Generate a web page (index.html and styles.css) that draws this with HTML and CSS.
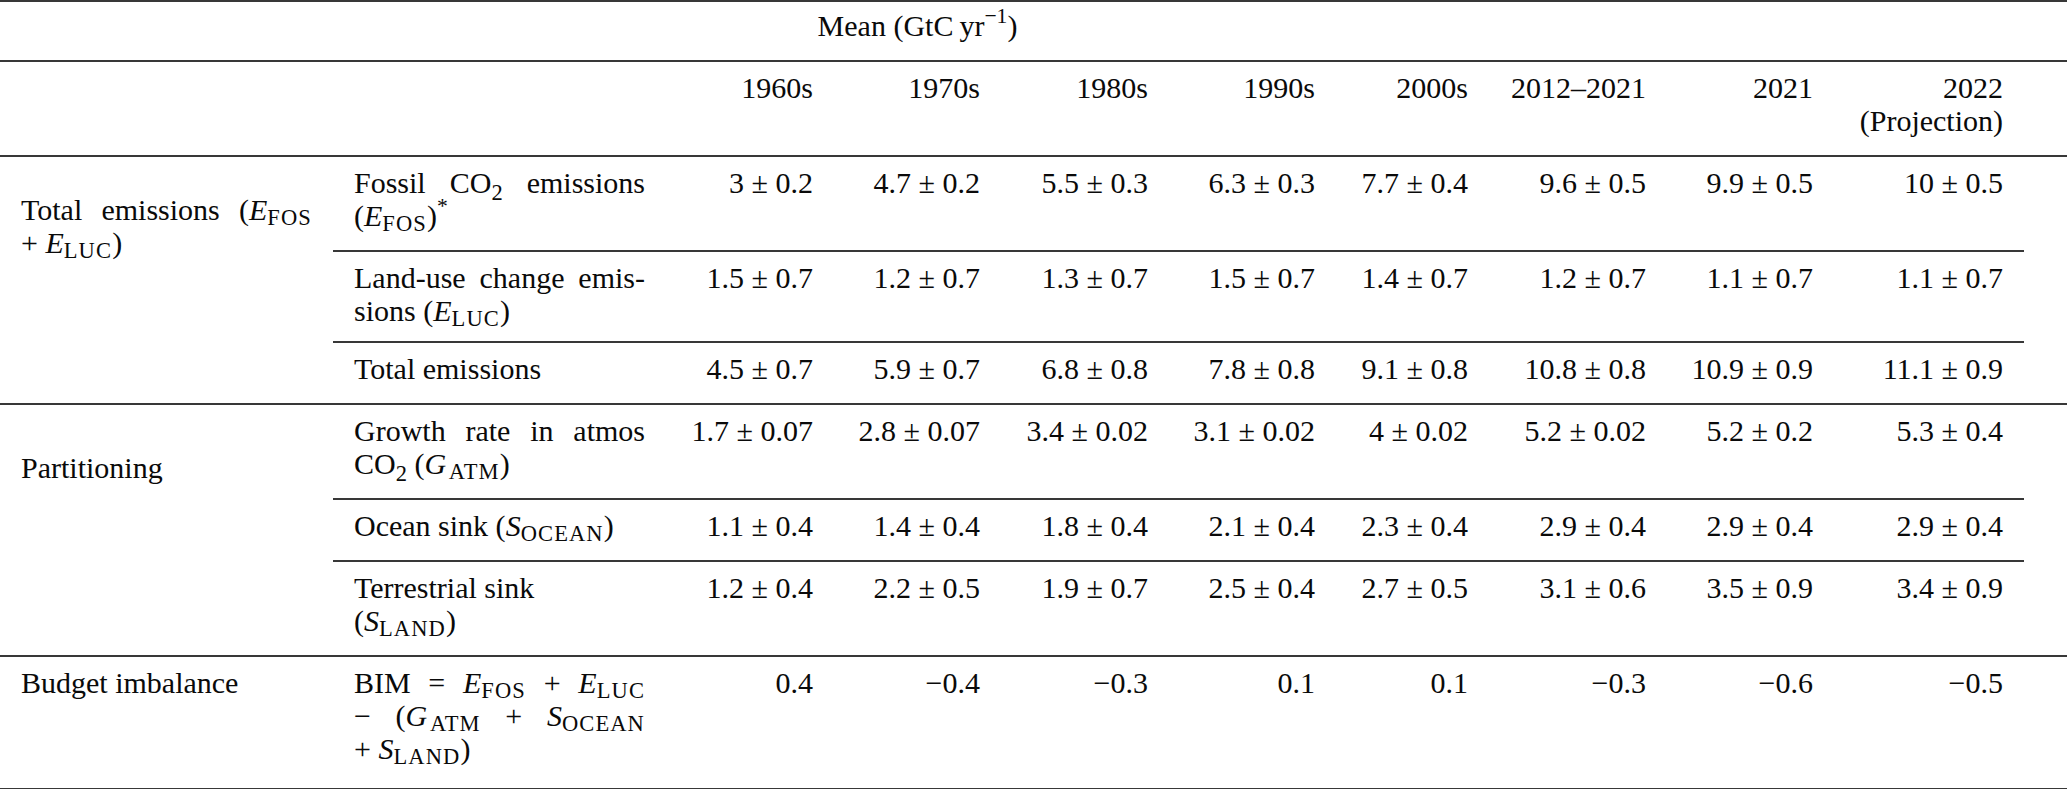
FILE: index.html
```html
<!DOCTYPE html>
<html lang="en">
<head>
<meta charset="utf-8">
<title>Global carbon budget</title>
<link rel="stylesheet" href="styles.css">
</head>
<body>
<table class="budget">
  <colgroup>
    <col class="c-label">
    <col class="c-desc">
    <col class="c-168">
    <col class="c-167">
    <col class="c-168">
    <col class="c-167">
    <col class="c-153">
    <col class="c-178">
    <col class="c-167">
    <col class="c-190">
    <col class="c-fill">
  </colgroup>
  <thead>
    <tr class="top">
      <th colspan="2" class="rule"></th>
      <th colspan="3" class="rule mean">Mean (GtC&#8201;yr<span class="sp">&minus;1</span>)</th>
      <th colspan="6" class="rule"></th>
    </tr>
    <tr>
      <th colspan="2" class="rule"></th>
      <th class="num rule">1960s</th>
      <th class="num rule">1970s</th>
      <th class="num rule">1980s</th>
      <th class="num rule">1990s</th>
      <th class="num rule">2000s</th>
      <th class="num rule">2012&ndash;2021</th>
      <th class="num rule">2021</th>
      <th class="num rule">2022<br>(Projection)</th>
      <th class="rule"></th>
    </tr>
  </thead>
  <tbody>
    <tr>
      <td rowspan="3" class="grp grp-total rule">
        <span class="ln just">Total emissions (<i class="m">E</i><span class="sb">FOS</span></span>
        <span class="ln">+ <i class="m">E</i><span class="sb">LUC</span>)</span>
      </td>
      <td class="desc rule">
        <span class="ln just">Fossil CO<span class="sb2">2</span> emissions</span>
        <span class="ln">(<i class="m">E</i><span class="sb">FOS</span>)<span class="sp">*</span></span>
      </td>
      <td class="num rule">3 ± 0.2</td>
      <td class="num rule">4.7 ± 0.2</td>
      <td class="num rule">5.5 ± 0.3</td>
      <td class="num rule">6.3 ± 0.3</td>
      <td class="num rule">7.7 ± 0.4</td>
      <td class="num rule">9.6 ± 0.5</td>
      <td class="num rule">9.9 ± 0.5</td>
      <td class="num rule">10 ± 0.5</td>
      <td rowspan="3" class="rule"></td>
    </tr>
    <tr class="tight">
      <td class="desc rule">
        <span class="ln just">Land-use change emis-</span>
        <span class="ln">sions (<i class="m">E</i><span class="sb">LUC</span>)</span>
      </td>
      <td class="num rule">1.5 ± 0.7</td>
      <td class="num rule">1.2 ± 0.7</td>
      <td class="num rule">1.3 ± 0.7</td>
      <td class="num rule">1.5 ± 0.7</td>
      <td class="num rule">1.4 ± 0.7</td>
      <td class="num rule">1.2 ± 0.7</td>
      <td class="num rule">1.1 ± 0.7</td>
      <td class="num rule">1.1 ± 0.7</td>
    </tr>
    <tr>
      <td class="desc rule">Total emissions</td>
      <td class="num rule">4.5 ± 0.7</td>
      <td class="num rule">5.9 ± 0.7</td>
      <td class="num rule">6.8 ± 0.8</td>
      <td class="num rule">7.8 ± 0.8</td>
      <td class="num rule">9.1 ± 0.8</td>
      <td class="num rule">10.8 ± 0.8</td>
      <td class="num rule">10.9 ± 0.9</td>
      <td class="num rule">11.1 ± 0.9</td>
    </tr>
    <tr>
      <td rowspan="3" class="grp grp-part rule">Partitioning</td>
      <td class="desc rule">
        <span class="ln just">Growth rate in atmos</span>
        <span class="ln">CO<span class="sb2">2</span> (<i class="m">G</i><span class="sb gap">ATM</span>)</span>
      </td>
      <td class="num rule">1.7 ± 0.07</td>
      <td class="num rule">2.8 ± 0.07</td>
      <td class="num rule">3.4 ± 0.02</td>
      <td class="num rule">3.1 ± 0.02</td>
      <td class="num rule">4 ± 0.02</td>
      <td class="num rule">5.2 ± 0.02</td>
      <td class="num rule">5.2 ± 0.2</td>
      <td class="num rule">5.3 ± 0.4</td>
      <td rowspan="3" class="rule"></td>
    </tr>
    <tr>
      <td class="desc rule">Ocean sink (<i class="m">S</i><span class="sb">OCEAN</span>)</td>
      <td class="num rule">1.1 ± 0.4</td>
      <td class="num rule">1.4 ± 0.4</td>
      <td class="num rule">1.8 ± 0.4</td>
      <td class="num rule">2.1 ± 0.4</td>
      <td class="num rule">2.3 ± 0.4</td>
      <td class="num rule">2.9 ± 0.4</td>
      <td class="num rule">2.9 ± 0.4</td>
      <td class="num rule">2.9 ± 0.4</td>
    </tr>
    <tr>
      <td class="desc rule">
        <span class="ln">Terrestrial sink</span>
        <span class="ln">(<i class="m">S</i><span class="sb">LAND</span>)</span>
      </td>
      <td class="num rule">1.2 ± 0.4</td>
      <td class="num rule">2.2 ± 0.5</td>
      <td class="num rule">1.9 ± 0.7</td>
      <td class="num rule">2.5 ± 0.4</td>
      <td class="num rule">2.7 ± 0.5</td>
      <td class="num rule">3.1 ± 0.6</td>
      <td class="num rule">3.5 ± 0.9</td>
      <td class="num rule">3.4 ± 0.9</td>
    </tr>
    <tr class="tall">
      <td class="grp rule">Budget imbalance</td>
      <td class="desc rule">
        <span class="ln just">BIM = <i class="m">E</i><span class="sb">FOS</span> + <i class="m">E</i><span class="sb">LUC</span></span>
        <span class="ln just">&minus; (<i class="m">G</i><span class="sb gap">ATM</span> + <i class="m">S</i><span class="sb">OCEAN</span></span>
        <span class="ln">+ <i class="m">S</i><span class="sb">LAND</span>)</span>
      </td>
      <td class="num rule">0.4</td>
      <td class="num rule">&minus;0.4</td>
      <td class="num rule">&minus;0.3</td>
      <td class="num rule">0.1</td>
      <td class="num rule">0.1</td>
      <td class="num rule">&minus;0.3</td>
      <td class="num rule">&minus;0.6</td>
      <td class="num rule">&minus;0.5</td>
      <td class="rule"></td>
    </tr>
  </tbody>
</table>
</body>
</html>
```
FILE: styles.css
```css
html, body {
  margin: 0;
  padding: 0;
  background: #ffffff;
}

body {
  font-family: "Liberation Serif", "Times New Roman", serif;
  font-size: 30px;
  line-height: 33px;
  color: #0a0a0a;
}

.budget {
  width: 2067px;
  table-layout: fixed;
  border-collapse: separate;
  border-spacing: 0;
}

.c-label { width: 333px; }
.c-desc  { width: 333px; }
.c-168   { width: 168px; }
.c-167   { width: 167px; }
.c-153   { width: 153px; }
.c-178   { width: 178px; }
.c-190   { width: 190px; }
.c-fill  { width: 43px; }

.budget th,
.budget td {
  padding: 9px 21px 18px;
  vertical-align: top;
  font-weight: normal;
  text-align: left;
}

.budget .rule {
  border-bottom: 2px solid #383838;
}

.budget .top th {
  border-top: 2px solid #383838;
  padding-top: 7px;
}

.budget .tight td {
  padding-bottom: 14px;
}

.budget .tall td {
  padding-bottom: 23px;
}

.budget .mean {
  text-align: center;
  padding-left: 0;
  padding-right: 0;
}

.budget .num {
  text-align: right;
}

.budget .grp-total {
  padding-top: 36px;
}

.budget .grp-part {
  padding-top: 46px;
}

.ln {
  display: block;
  text-align: left;
}

.ln.just {
  text-align: justify;
  text-align-last: justify;
}

.m {
  font-style: italic;
}

.sb {
  font-size: 0.75em;
  letter-spacing: 0.05em;
  line-height: 0;
  vertical-align: -0.2em;
}

.sb.gap {
  margin-left: 0.12em;
}

.sb2 {
  font-size: 0.75em;
  line-height: 0;
  vertical-align: -0.3em;
}

.sp {
  font-size: 0.72em;
  line-height: 0;
  vertical-align: 0.6em;
}
```
